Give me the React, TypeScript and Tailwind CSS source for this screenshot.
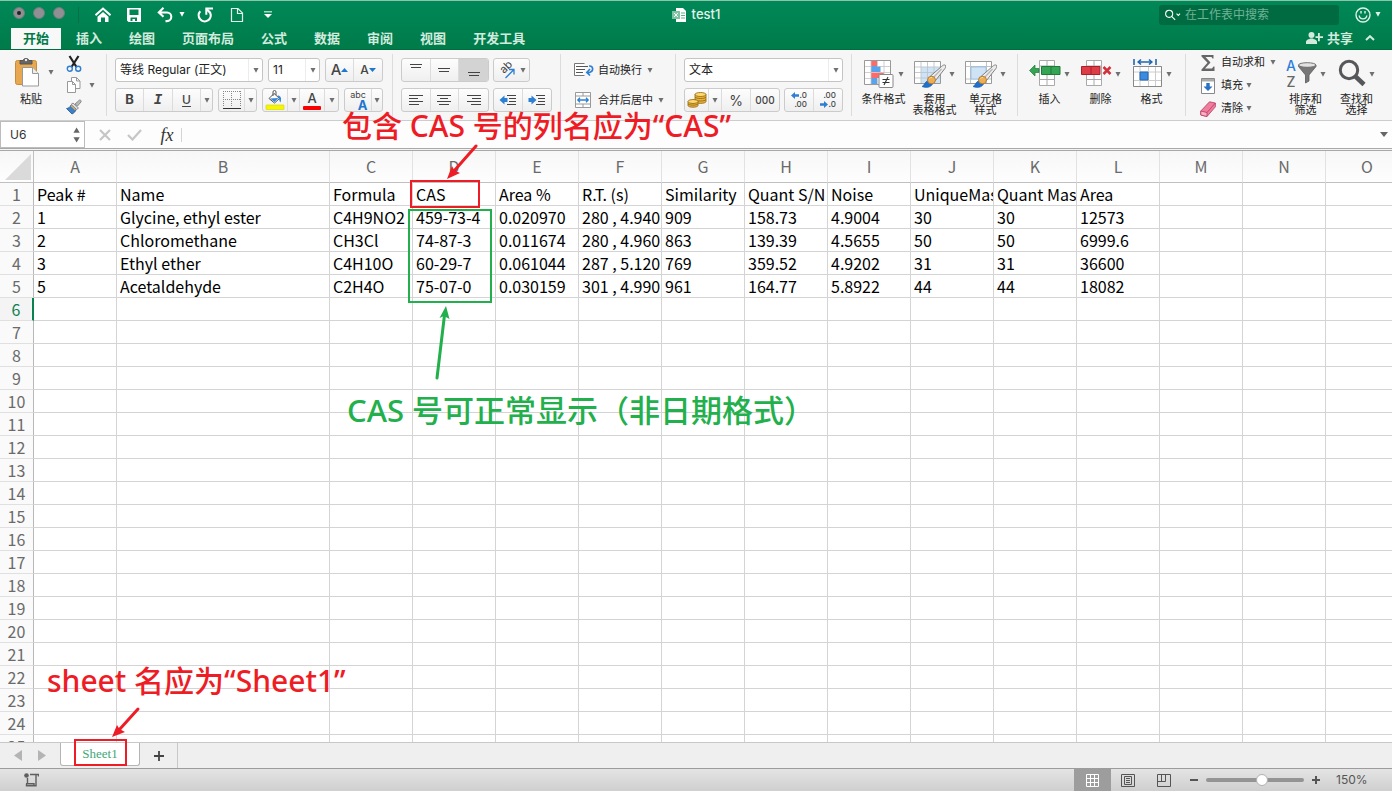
import React from "react";

const UI = "font-['Inter','Noto_Sans_CJK_SC',sans-serif]";
const SHEET = "font-['Noto_Sans_CJK_SC',sans-serif]";
const NOTE = "font-['Noto_Sans','Noto_Sans_CJK_SC',sans-serif]";

const columns = ["A", "B", "C", "D", "E", "F", "G", "H", "I", "J", "K", "L", "M", "N", "O"];

const data: string[][] = [
  ["Peak #", "Name", "Formula", "CAS", "Area %", "R.T. (s)", "Similarity", "Quant S/N", "Noise", "UniqueMass", "Quant Mass", "Area"],
  ["1", "Glycine, ethyl ester", "C4H9NO2", "459-73-4", "0.020970", "280 , 4.940", "909", "158.73", "4.9004", "30", "30", "12573"],
  ["2", "Chloromethane", "CH3Cl", "74-87-3", "0.011674", "280 , 4.960", "863", "139.39", "4.5655", "50", "50", "6999.6"],
  ["3", "Ethyl ether", "C4H10O", "60-29-7", "0.061044", "287 , 5.120", "769", "359.52", "4.9202", "31", "31", "36600"],
  ["5", "Acetaldehyde", "C2H4O", "75-07-0", "0.030159", "301 , 4.990", "961", "164.77", "5.8922", "44", "44", "18082"],
];

const rowNumbers = Array.from({ length: 25 }, (_, i) => i + 1);

function Caret({ className = "text-[#707070]" }: { className?: string }) {
  return (
    <svg width="6" height="5" viewBox="0 0 6 5" className={`shrink-0 ${className}`} aria-hidden="true">
      <path d="M.5 0h5L3 4.800z" fill="currentColor" />
    </svg>
  );
}

function Separator() {
  return <div className="mt-1 h-[62px] w-px shrink-0 bg-[#dcdcdc]" />;
}

function Box({ children, className = "" }: { children: React.ReactNode; className?: string }) {
  return (
    <div
      className={`flex h-6 shrink-0 divide-x divide-[#dcdcdc] overflow-hidden rounded-[3px] border border-[#cbcbcb] bg-gradient-to-b from-[#fdfdfd] to-[#efefef] ${className}`}
    >
      {children}
    </div>
  );
}

function Tool({ label, className = "", children }: { label: string; className?: string; children: React.ReactNode }) {
  return (
    <button type="button" aria-label={label} className={`flex h-full items-center justify-center ${className}`}>
      {children}
    </button>
  );
}

function Picker({ label, value, className }: { label: string; value: string; className: string }) {
  return (
    <label className={`relative flex h-6 shrink-0 rounded-[3px] border border-[#c4c4c4] bg-white ${className}`}>
      <select aria-label={label} className="h-full w-full appearance-none bg-transparent pl-1 text-[12px] text-[#222] outline-none">
        <option>{value}</option>
      </select>
      <span className="pointer-events-none absolute inset-y-0 right-0 flex w-[14px] items-center justify-center border-l border-[#ececec]">
        <Caret />
      </span>
    </label>
  );
}

function BigButton({ lines, icon }: { lines: string[]; icon: React.ReactNode }) {
  return (
    <button type="button" className="flex w-[51px] shrink-0 flex-col items-center pt-2 text-[11px] leading-[11px] text-[#222]">
      <span className="flex h-8 items-center gap-[3px]">
        {icon}
        <Caret />
      </span>
      <span className="mt-1 whitespace-nowrap">
        {lines.map((line) => (
          <span key={line} className="block">
            {line}
          </span>
        ))}
      </span>
    </button>
  );
}

function Lines({ rows }: { rows: [number, number, number][] }) {
  return (
    <svg width="16" height="16" viewBox="0 0 16 16" aria-hidden="true">
      {rows.map(([x, y, w]) => (
        <rect key={y} x={x} y={y} width={w} height="1" fill="#444" />
      ))}
    </svg>
  );
}

function GridIcon({ children, w = 32 }: { children?: React.ReactNode; w?: number }) {
  return (
    <svg width={w} height="32" viewBox={`0 0 ${w} 32`} aria-hidden="true">
      {children}
    </svg>
  );
}

function StyleBrush() {
  return (
    <>
      <path d="M31.300 7.200c.8.900.4 2.100-.4 3.300L21.500 22.500 16.500 18l11-9.500c1.300-1.200 2.800-2 3.800-1.300z" fill="#ededed" stroke="#808080" />
      <path d="M27.500 11 19 20" stroke="#b5b5b5" strokeWidth="1.200" />
      <path d="M8 28.500c2.500-1 2.500-4.500 6-6l4.500 3.500c-1.500 3.500-6.500 4.200-10.500 2.500z" fill="#1f6fd0" stroke="#1a57a0" strokeWidth=".6" />
      <ellipse cx="17.500" cy="22" rx="4" ry="3.800" fill="#eeae54" stroke="#a8712c" strokeWidth=".8" />
      <path d="M15.500 20.500a3 3 0 0 1 2.500-1" fill="none" stroke="#fbdca6" />
    </>
  );
}

function TitleBar() {
  const tabs = ["插入", "绘图", "页面布局", "公式", "数据", "审阅", "视图", "开发工具"];
  return (
    <header className="shrink-0 border-t border-[#8cc5a8] bg-gradient-to-b from-[#008858] to-[#007a49] text-white">
      <div className="grid h-[27px] grid-cols-[1fr_auto_1fr] items-center">
        <div className="flex h-full items-center">
          <div className="flex gap-2 pb-1 pl-[13px]">
            <button type="button" aria-label="关闭" className="flex size-3 items-center justify-center rounded-full border border-[#6f7d78] bg-[#909094]">
              <span className="size-1 rounded-full bg-[#222]" />
            </button>
            <button type="button" aria-label="最小化" className="size-3 rounded-full border border-[#6f7d78] bg-[#909094]" />
            <button type="button" aria-label="缩放" className="size-3 rounded-full border border-[#6f7d78] bg-[#909094]" />
          </div>
          <div className="ml-[13px] h-4 w-px bg-[#0a6e46]" />
          <button type="button" aria-label="主页" className="ml-4">
            <svg width="16" height="16" viewBox="0 0 16 16" aria-hidden="true">
              <path d="M.5 8.200 8 1.500l7.500 6.700" fill="none" stroke="#fff" strokeWidth="2" />
              <path d="M2.500 9.800 8 5l5.500 4.800V15H10v-4.500H6V15H2.500z" fill="#fff" />
            </svg>
          </button>
          <button type="button" aria-label="保存" className="ml-[15px]">
            <svg width="16" height="16" viewBox="0 0 16 16" aria-hidden="true">
              <path fillRule="evenodd" d="M1 1h14v14H2.500L1 13.500zM3.500 2.500V8h9V2.500zM4.500 10.500V14h2V12h2.500v2h2v-3.500z" fill="#fff" />
            </svg>
          </button>
          <button type="button" aria-label="撤消" className="ml-[15px]">
            <svg width="16" height="16" viewBox="0 0 16 16" aria-hidden="true">
              <path d="M6.500.8 1.800 5.500l4.700 4.200M2.500 5.500h7.500a4.300 4.300 0 0 1 0 8.600H8.500" fill="none" stroke="#fff" strokeWidth="2.100" />
            </svg>
          </button>
          <Caret className="ml-[6px] text-white" />
          <button type="button" aria-label="恢复" className="ml-3">
            <svg width="17" height="16" viewBox="0 0 17 16" aria-hidden="true">
              <path d="M3.300 4.200a6 6 0 1 0 9.800 1.500L10 2.500" fill="none" stroke="#fff" strokeWidth="2.200" />
              <path d="M16 1.500H9.300v6.300" fill="none" stroke="#fff" strokeWidth="2" />
            </svg>
          </button>
          <button type="button" aria-label="新建" className="ml-[15px]">
            <svg width="16" height="16" viewBox="0 0 16 16" aria-hidden="true">
              <path d="M2.500 1.500H9L13.500 6v8.500h-11zM8.500 1.500v5h5" fill="none" stroke="#e4f3ec" strokeWidth="1.200" />
            </svg>
          </button>
          <button type="button" aria-label="自定义工具栏" className="ml-[19px]">
            <svg width="8" height="8" viewBox="0 0 8 8" aria-hidden="true">
              <path d="M0 0h8v1.500H0z" fill="#a9d6c2" />
              <path d="M0 3h8L4 7z" fill="#fff" />
            </svg>
          </button>
        </div>
        <h1 className="flex items-center gap-[6px] text-[13px] font-medium text-[#e3f3eb]">
          <svg width="14" height="14" viewBox="0 0 14 14" aria-hidden="true">
            <path d="M4 0h7l3 3v11H4z" fill="#fff" />
            <path d="M9 5h4M9 7.500h4M9 10h4" stroke="#59b18b" />
            <path d="M0 3h8v8H0z" fill="#7cc2a3" />
            <path d="m2.200 5 3.600 4m0-4L2.200 9" stroke="#fff" />
          </svg>
          test1
        </h1>
        <div className="flex items-center justify-end">
          <label className="flex h-5 w-[180px] items-center rounded-[3px] bg-[#006b41] pl-[6px]">
            <svg width="18" height="12" viewBox="0 0 18 12" fill="none" stroke="#fff" strokeWidth="1.200" aria-hidden="true">
              <circle cx="4.700" cy="4.700" r="4" />
              <path d="m7.500 7.500 4 4M13 4.500l2 2 2-2" />
            </svg>
            <input
              aria-label="在工作表中搜索"
              placeholder="在工作表中搜索"
              className="ml-1 w-full bg-transparent text-[12px] outline-none placeholder:text-[#71b398]"
            />
          </label>
          <button type="button" aria-label="反馈" className="ml-4 flex items-center gap-1 pr-[11px]">
            <svg width="16" height="16" viewBox="0 0 16 16" fill="none" stroke="#dff2e9" strokeWidth="1.400" aria-hidden="true">
              <circle cx="8" cy="8" r="7" />
              <path d="M4.200 8.500c.5 4.500 7.100 4.500 7.600 0M6 4v2.500M10 4v2.500" />
            </svg>
            <Caret className="text-[#dff2e9]" />
          </button>
        </div>
      </div>
      <div className="flex h-[22px] items-end justify-between border-b border-[#006d40]">
        <nav className="flex gap-[3px] pl-[11px] text-[13px] font-bold leading-[21px] text-[#d3ebdf]">
          <a href="#home" className="bg-[#f8f8f8] px-3 text-[#007a49]">
            开始
          </a>
          {tabs.map((tab) => (
            <a key={tab} href={`#${tab}`} className="px-3">
              {tab}
            </a>
          ))}
        </nav>
        <div className="flex items-center gap-3 pr-[17px] text-[13px] font-bold leading-[22px] text-[#d3ebdf]">
          <button type="button" className="flex items-center gap-1">
            <svg width="17" height="12" viewBox="0 0 17 12" fill="currentColor" aria-hidden="true">
              <circle cx="5.500" cy="3" r="3" />
              <path d="M0 12V9.500C1 7 3 7.800 4 6.500h3c1 1.300 3 .5 4 3V12zM12 1h1.800v3.200H17V6h-3.200v3.200H12V6H9.500V4.200H12z" />
            </svg>
            共享
          </button>
          <button type="button" aria-label="折叠功能区">
            <svg width="10" height="6" viewBox="0 0 10 6" fill="none" stroke="currentColor" strokeWidth="2" aria-hidden="true">
              <path d="m1 5 4-3.800L9 5" />
            </svg>
          </button>
        </div>
      </div>
    </header>
  );
}

function ClipboardGroup() {
  return (
    <div className="flex w-[106px] shrink-0 pl-[14px]">
      <button type="button" className="flex w-[52px] flex-col items-start pt-[6px] text-[11px] leading-[14px] text-[#222]">
        <span className="flex items-center gap-2">
          <svg width="26" height="32" viewBox="0 0 26 32" aria-hidden="true">
            <rect x="1.500" y="4.500" width="21" height="24" rx="2" fill="#e8a850" stroke="#c98b38" />
            <path d="M6 8V4.500h3a3.200 3.200 0 0 1 6 0h3V8z" fill="#666" stroke="#555" />
            <circle cx="12" cy="4" r="1.200" fill="#eee" />
            <path d="M8.500 11.500h10l6 6V30h-16z" fill="#fff" stroke="#999" />
            <path d="M18.500 11.500v6h6" fill="#eee" stroke="#999" />
          </svg>
          <Caret />
        </span>
        <span className="pl-[6px] pt-1">粘贴</span>
      </button>
      <div className="flex flex-col">
        <Tool label="剪切" className="h-[23px] w-4">
          <svg width="16" height="18" viewBox="0 0 16 18" fill="none" aria-hidden="true">
            <path d="M3.500 1 10.500 12M12.500 1 5.500 12" stroke="#222" strokeWidth="2.200" />
            <circle cx="3.800" cy="13.800" r="2.500" stroke="#2f7dd1" strokeWidth="1.400" />
            <circle cx="12.200" cy="13.800" r="2.500" stroke="#2f7dd1" strokeWidth="1.400" />
          </svg>
        </Tool>
        <button type="button" aria-label="复制" className="flex h-[23px] items-center gap-[7px]">
          <svg width="16" height="16" viewBox="0 0 16 16" fill="#fff" stroke="#999" aria-hidden="true">
            <path d="M5.500.5h5l3.500 3.500v7.500H5.500zM10.500.5V4H14" />
            <path d="M1.500 4.500h5l3 3v8h-8zM6.500 4.500v3h3" />
          </svg>
          <Caret />
        </button>
        <Tool label="格式刷" className="h-[23px] w-4">
          <svg width="16" height="16" viewBox="0 0 16 16" aria-hidden="true">
            <path d="M13.500 1c1.500 0 2 1 1.500 2l-3.500 4L9 5z" fill="#bbb" stroke="#777" strokeWidth=".8" />
            <path d="m7 4 5.500 5-2 1.500L5 5.500z" fill="#ddd" stroke="#777" strokeWidth=".8" />
            <path d="m5 6 5 4.500c-.5 2-2 3.500-4 4.500L.5 9.500C2.500 9.500 4 8 5 6z" fill="#3f80c4" stroke="#23568f" strokeWidth=".8" />
            <path d="m5.300 6 4.700 4.300-1 1L4.500 7z" fill="#e3ad62" />
          </svg>
        </Tool>
      </div>
    </div>
  );
}

function FontGroup() {
  return (
    <div className="flex shrink-0 flex-col gap-[6px] pl-2 pr-[9px] pt-2">
      <div className="flex gap-[5px]">
        <Picker label="字体" value="等线 Regular (正文)" className="w-[148px]" />
        <Picker label="字号" value="11" className="w-[52px]" />
        <Box className="w-[58px]">
          <Tool label="增大字号" className="w-1/2">
            <span className="text-[15px] font-medium text-[#444]">A</span>
            <svg width="7" height="4" viewBox="0 0 7 4" aria-hidden="true">
              <path d="M0 4h7L3.500 0z" fill="#1d76cf" />
            </svg>
          </Tool>
          <Tool label="减小字号" className="w-1/2">
            <span className="text-[12px] font-medium text-[#444]">A</span>
            <svg width="7" height="4" viewBox="0 0 7 4" aria-hidden="true">
              <path d="M0 0h7L3.500 4z" fill="#1d76cf" />
            </svg>
          </Tool>
        </Box>
      </div>
      <div className="flex gap-[5px] text-[#444]">
        <Box className="w-[98px]">
          <Tool label="加粗" className="w-7 text-[13px] font-bold">B</Tool>
          <Tool label="倾斜" className="w-[29px] font-['Liberation_Mono',monospace] text-[14px] font-bold italic">I</Tool>
          <Tool label="下划线" className="w-7 text-[12px] font-medium underline underline-offset-2">U</Tool>
          <Tool label="下划线选项" className="flex-1">
            <Caret />
          </Tool>
        </Box>
        <Box className="w-[39px]">
          <Tool label="边框" className="w-[26px]">
            <svg width="18" height="18" viewBox="0 0 18 18" aria-hidden="true">
              <path
                d="M0 .5h18M0 8.500h18M.5 0v16M8.500 0v16M17.500 0v16"
                fill="none"
                stroke="#888"
                strokeDasharray="1 1"
              />
              <path d="M0 17h18v1H0z" fill="#333" />
            </svg>
          </Tool>
          <Tool label="边框选项" className="flex-1">
            <Caret />
          </Tool>
        </Box>
        <Box className="w-[77px]">
          <Tool label="填充颜色" className="w-[25px]">
            <svg width="20" height="20" viewBox="0 0 20 20" aria-hidden="true">
              <path d="m4 8.500 5-5 5.500 5-5 4.500z" fill="#fff" stroke="#555" />
              <path d="m5 8.500 8.500-.5-4 4z" fill="#3287d9" />
              <path d="M8 6V2a1.500 1.500 0 0 1 3 0v3" fill="none" stroke="#555" />
              <path d="M12.500 5.500c3 0 4.500 2.500 3 7-1.300-1-1-4-3-7z" fill="#3287d9" />
              <rect x="1" y="15" width="18" height="4.500" rx=".5" fill="#f6f600" stroke="#d5d500" strokeWidth=".6" />
            </svg>
          </Tool>
          <Tool label="填充颜色选项" className="w-3">
            <Caret />
          </Tool>
          <Tool label="字体颜色" className="w-[25px] flex-col gap-px">
            <span className="text-[13px] font-medium leading-[14px]">A</span>
            <span className="h-1 w-[18px] rounded-[1px] bg-[#f60000]" />
          </Tool>
          <Tool label="字体颜色选项" className="flex-1">
            <Caret />
          </Tool>
        </Box>
        <Box className="w-[39px]">
          <Tool label="拼音指南" className="w-[27px]">
            <span className="flex flex-col">
              <span className="text-[9px] leading-[9px]">abc</span>
              <span className="pl-[9px] text-[13px] font-bold leading-[12px] text-[#1d76cf]">A</span>
            </span>
          </Tool>
          <Tool label="拼音选项" className="flex-1">
            <Caret />
          </Tool>
        </Box>
      </div>
    </div>
  );
}

function AlignGroup() {
  return (
    <div className="flex shrink-0 flex-col gap-[6px] px-2 pt-2">
      <div className="flex gap-1">
        <Box className="w-[88px]">
          <Tool label="顶端对齐" className="w-1/3">
            <Lines rows={[[2, 2, 12], [3, 5, 10]]} />
          </Tool>
          <Tool label="垂直居中" className="w-1/3">
            <Lines rows={[[2, 6, 12], [3, 9, 10]]} />
          </Tool>
          <Tool label="底端对齐" className="w-1/3 bg-[#d3d3d3]">
            <Lines rows={[[2, 10, 12], [3, 13, 10]]} />
          </Tool>
        </Box>
        <Box className="w-[37px]">
          <Tool label="方向" className="w-full gap-[3px]">
            <svg width="20" height="20" viewBox="0 0 20 20" fill="none" aria-hidden="true">
              <text x="0" y="0" fontSize="11" fill="#444" transform="translate(7 14) rotate(-45)">
                ab
              </text>
              <path d="m8.500 18 8.500-8.500m-5 0h5v5" stroke="#2d7fd3" strokeWidth="1.300" />
            </svg>
            <Caret />
          </Tool>
        </Box>
      </div>
      <div className="flex gap-1">
        <Box className="w-[88px]">
          <Tool label="左对齐" className="w-1/3">
            <Lines rows={[[1, 3, 14], [1, 6, 9], [1, 9, 14], [1, 12, 10]]} />
          </Tool>
          <Tool label="居中" className="w-1/3">
            <Lines rows={[[1, 3, 14], [4, 6, 8], [1, 9, 14], [3, 12, 10]]} />
          </Tool>
          <Tool label="右对齐" className="w-1/3">
            <Lines rows={[[1, 3, 14], [6, 6, 9], [1, 9, 14], [5, 12, 10]]} />
          </Tool>
        </Box>
        <Box className="w-[59px]">
          <Tool label="减少缩进量" className="w-1/2">
            <svg width="18" height="14" viewBox="0 0 18 14" aria-hidden="true">
              <path d="M8 2.500h9M10 5.500h7M10 8.500h7M8 11.500h9" stroke="#444" />
              <path d="M.5 7 5.500 2.500V5h3v4h-3v2.500z" fill="#2d7fd3" />
            </svg>
          </Tool>
          <Tool label="增加缩进量" className="w-1/2">
            <svg width="18" height="14" viewBox="0 0 18 14" aria-hidden="true">
              <path d="M8 2.500h9M10 5.500h7M10 8.500h7M8 11.500h9" stroke="#444" />
              <path d="M8.500 7l-5-4.500V5h-3v4h3v2.500z" fill="#2d7fd3" />
            </svg>
          </Tool>
        </Box>
      </div>
    </div>
  );
}

function WrapGroup() {
  return (
    <div className="flex w-[114px] shrink-0 flex-col gap-[6px] pl-[13px] pt-2 text-[11px] text-[#222]">
      <button type="button" className="flex h-6 items-center">
        <svg width="20" height="14" viewBox="0 0 20 14" fill="none" aria-hidden="true">
          <path d="M10.500.5H.5v12h10" stroke="#777" fill="#fff" />
          <path d="M2 3.500h12M2 6.500h9M2 9.500h7" stroke="#555" />
          <path d="M15 3c4-.5 5.500 5 .5 6.500H13m3-3.500-3.200 3.400L16 12.500" stroke="#2d7fd3" strokeWidth="1.600" />
        </svg>
        <span className="ml-1 mr-[5px]">自动换行</span>
        <Caret />
      </button>
      <button type="button" className="flex h-6 items-center">
        <svg width="18" height="18" viewBox="0 0 18 18" fill="none" aria-hidden="true">
          <path d="M1.500 1.500h15v15h-15zM1.500 5h15M1.500 13h15M9 1.500V5M9 13v3.500" stroke="#999" fill="#fff" />
          <path d="M4 9h10M6 6.800 3.800 9 6 11.200M12 6.800 14.200 9 12 11.200" stroke="#2d7fd3" strokeWidth="1.300" />
        </svg>
        <span className="ml-[6px] mr-[5px]">合并后居中</span>
        <Caret />
      </button>
    </div>
  );
}

function NumberGroup() {
  return (
    <div className="flex shrink-0 flex-col gap-[6px] px-2 pt-2">
      <Picker label="数字格式" value="文本" className="w-[159px]" />
      <div className="flex gap-1 text-[#444]">
        <Box className="w-[96px]">
          <Tool label="会计格式" className="w-6">
            <svg width="20" height="16" viewBox="0 0 20 16" fill="#e9b33a" stroke="#8d6210" strokeWidth=".8" aria-hidden="true">
              <path d="M8 2.500v7c0 2.500 11 2.500 11 0v-7z" />
              <path d="M8 5c1 2 10 2 11 0M8 7.500c1 2 10 2 11 0" fill="none" />
              <ellipse cx="13.500" cy="2.500" rx="5.500" ry="2" fill="#ffd970" />
              <path d="M1 9.500v4c0 2.300 10 2.300 10 0v-4z" />
              <path d="M1 11.800c1 1.800 9 1.800 10 0" fill="none" />
              <ellipse cx="6" cy="9.500" rx="5" ry="2" fill="#ffd970" />
            </svg>
          </Tool>
          <Tool label="会计格式选项" className="w-[13px]">
            <Caret />
          </Tool>
          <Tool label="百分比" className="w-[29px] text-[14px]">%</Tool>
          <Tool label="千位分隔" className="flex-1 text-[10px] font-medium">000</Tool>
        </Box>
        <Box className="w-[59px] text-[8px] font-medium leading-[9px]">
          <Tool label="增加小数位数" className="w-1/2">
            <span className="flex flex-col items-end">
              <span className="flex items-center gap-px">
                <svg width="8" height="7" viewBox="0 0 8 7" aria-hidden="true">
                  <path d="M0 3.500 4 0v2.200h4v2.600H4V7z" fill="#2d7fd3" />
                </svg>
                .0
              </span>
              <span>.00</span>
            </span>
          </Tool>
          <Tool label="减少小数位数" className="w-1/2">
            <span className="flex flex-col items-end">
              <span>.00</span>
              <span className="flex items-center gap-px">
                <svg width="8" height="7" viewBox="0 0 8 7" aria-hidden="true">
                  <path d="M8 3.500 4 0v2.200H0v2.600h4V7z" fill="#2d7fd3" />
                </svg>
                .0
              </span>
            </span>
          </Tool>
        </Box>
      </div>
    </div>
  );
}

function StylesGroup() {
  return (
    <div className="flex shrink-0 px-[6px]">
      <BigButton
        lines={["条件格式"]}
        icon={
          <GridIcon>
            <path d="M1.500 2.500h26v24h-26z" fill="#fff" stroke="#999" />
            <path d="M8 3h6v5H8zM8 14.500h13V20H8z" fill="#fa6b6b" />
            <path d="M8 8h9.500v6H8zM8 20h6v6H8z" fill="#57a3ec" />
            <path d="M2 8.500h6M2 14.500h6M2 20.500h6M14 8.500h13M14 14.500h13M21 20.500h6M8 3v23M14.500 3v5M14.500 20v6M21 3v23" stroke="#c4c4c4" fill="none" strokeWidth=".8" />
            <rect x="16" y="16.500" width="14" height="13" rx="1" fill="#fff" stroke="#888" />
            <path d="M19.500 21.500h7M19.500 24.500h7M25 19l-4 8" stroke="#333" strokeWidth="1.100" />
          </GridIcon>
        }
      />
      <BigButton
        lines={["套用", "表格格式"]}
        icon={
          <GridIcon>
            <path d="M.5 3.500h26v22H.5z" fill="#fff" stroke="#999" />
            <path d="M7 9h19v16H7z" fill="#cfe3f6" />
            <path d="M1 9h25M1 14.500h25M1 20h25M7 4v21M13.500 4v21M20 4v21" stroke="#bcc5cc" fill="none" strokeWidth=".9" />
            <StyleBrush />
          </GridIcon>
        }
      />
      <BigButton
        lines={["单元格", "样式"]}
        icon={
          <GridIcon>
            <path d="M.5 3.500h26v22H.5z" fill="#fff" stroke="#999" />
            <path d="M1 8.500h25M1 21h25M5.500 4v21M21.500 4v21" stroke="#c4c4c4" fill="none" />
            <path d="M6 9h15v12H6z" fill="#cfe3f6" stroke="#8ab6df" strokeWidth=".7" />
            <StyleBrush />
          </GridIcon>
        }
      />
    </div>
  );
}

function CellsGroup() {
  return (
    <div className="flex shrink-0 pl-[6px] pr-2">
      <BigButton
        lines={["插入"]}
        icon={
          <GridIcon>
            <path d="M10.500 2.500h15v25h-15zM10.500 8h15M10.500 21.500h15M18 2.500v25" fill="#fff" stroke="#aaa" />
            <path d="M12.500 8.500H31v8H12.500z" fill="#35a455" stroke="#1d7a39" />
            <path d="M22 8.500v8" stroke="#1d7a39" />
            <path d="M.5 12.500 6 7v3.500h4v4H6V18z" fill="#35a455" stroke="#1d7a39" strokeWidth=".7" />
          </GridIcon>
        }
      />
      <BigButton
        lines={["删除"]}
        icon={
          <GridIcon>
            <path d="M6.500 2.500h15v25h-15zM6.500 8h15M6.500 21.500h15M14 2.500v25" fill="#fff" stroke="#aaa" />
            <path d="M1.500 8.500H20v8H1.500z" fill="#dd3d46" stroke="#a92029" />
            <path d="M11 8.500v8" stroke="#a92029" />
            <path d="m23.500 9 7 7m0-7-7 7" stroke="#d2303a" strokeWidth="2.500" />
          </GridIcon>
        }
      />
      <BigButton
        lines={["格式"]}
        icon={
          <GridIcon>
            <path d="M2.500 8.500h28v20h-28zM2.500 14h28M2.500 22.500h28M9 8.500v20M17.500 8.500v20M24.500 8.500v20" fill="#fff" stroke="#ccc" />
            <path d="M2.500 8.500h28v20h-28z" fill="none" stroke="#888" />
            <path d="M9 14h8v8H9z" fill="#3c8be0" stroke="#2367b0" />
            <path d="M3 1v6M25 1v6M8 4h12M10 1.500 7.200 4 10 6.500M18 1.500 20.800 4 18 6.500" stroke="#2367b0" strokeWidth="1.600" fill="none" />
          </GridIcon>
        }
      />
    </div>
  );
}

function EditGroup() {
  return (
    <div className="flex shrink-0 pl-[14px]">
      <div className="flex w-20 flex-col pt-px text-[11px] text-[#222]">
        <button type="button" className="flex h-[23px] items-center">
          <svg width="16" height="18" viewBox="0 0 16 18" aria-hidden="true">
            <path d="M1.500 1h12v3.500H12.500L11.500 3H5.500l5 5.500-5.500 6h7l1.500-2h1V17H1.500v-1.500l6-6.800L1.500 2.500z" fill="#666" />
          </svg>
          <span className="ml-[5px] mr-[5px]">自动求和</span>
          <Caret />
        </button>
        <button type="button" className="flex h-[23px] items-center">
          <svg width="16" height="16" viewBox="0 0 16 16" aria-hidden="true">
            <path d="M1.500.5h13v15h-13z" fill="#fff" stroke="#888" />
            <path d="M2 1h12v2.500H2z" fill="#aaa" />
            <path d="M6.300 5h3.400v3.500h2.800L8 13 3.500 8.500h2.800z" fill="#2971c4" />
          </svg>
          <span className="ml-[5px] mr-[3px]">填充</span>
          <Caret />
        </button>
        <button type="button" className="flex h-[23px] items-center">
          <svg width="16" height="16" viewBox="0 0 16 16" stroke="#b83b63" strokeWidth=".8" aria-hidden="true">
            <path d="M9.500.8 15.400 2v3.800L7 15.500.8 14V10z" fill="#ef7d9c" />
            <path d="M.8 10 7 11.500v4L.8 14z" fill="#f9b3c4" />
            <path d="M7 11.500 15.400 2" fill="none" />
          </svg>
          <span className="ml-[5px] mr-[3px]">清除</span>
          <Caret />
        </button>
      </div>
      <BigButton
        lines={["排序和", "筛选"]}
        icon={
          <span className="flex">
            <span className="flex w-3 flex-col items-center text-[14px] font-medium leading-4">
              <span className="text-[#2b7fdb]">A</span>
              <span className="text-[#666]">Z</span>
            </span>
            <svg width="20" height="32" viewBox="0 0 20 32" aria-hidden="true">
              <path d="M1.500 7v1.500l7 8.500v8l3.500-2V17l7-8.500V7z" fill="#777" stroke="#5a5a5a" strokeWidth=".8" />
              <ellipse cx="10.200" cy="7" rx="8.700" ry="2.300" fill="#e2e2e2" stroke="#666" strokeWidth=".9" />
            </svg>
          </span>
        }
      />
      <BigButton
        lines={["查找和", "选择"]}
        icon={
          <GridIcon w={28}>
            <circle cx="11" cy="12" r="8.700" fill="#f6f6f6" stroke="#55575a" strokeWidth="3" />
            <path d="m17.500 18.500 8.500 8" stroke="#55575a" strokeWidth="4.500" />
          </GridIcon>
        }
      />
    </div>
  );
}

function FormulaBar() {
  return (
    <div className="flex h-[27px] shrink-0 bg-[#fdfdfd]">
      <label className="flex w-[85px] shrink-0 items-center border border-[#bcbcbc] bg-white pl-[9px] pr-1">
        <input aria-label="名称框" defaultValue="U6" className="w-full min-w-0 bg-transparent text-[12px] text-[#333] outline-none" />
        <svg width="8" height="18" viewBox="0 0 8 18" fill="#666" aria-hidden="true">
          <path d="M.5 6.500h7L4 .5zM.5 11.500h7L4 17.500z" />
        </svg>
      </label>
      <div className="flex shrink-0 items-center pl-[14px]">
        <button type="button" aria-label="取消">
          <svg width="12" height="12" viewBox="0 0 12 12" stroke="#c6c6c6" strokeWidth="2.200" aria-hidden="true">
            <path d="m1 1 10 10M11 1 1 11" />
          </svg>
        </button>
        <button type="button" aria-label="输入" className="ml-4">
          <svg width="15" height="12" viewBox="0 0 15 12" fill="none" stroke="#c6c6c6" strokeWidth="2.200" aria-hidden="true">
            <path d="m1 6 4.500 4.500L14 1" />
          </svg>
        </button>
        <button type="button" className="ml-4 w-[18px] font-['Liberation_Serif',serif] text-[18px] italic leading-5 text-[#333]">
          fx
        </button>
        <div className="ml-[5px] h-[14px] w-px bg-[#d5d5d5]" />
      </div>
      <input aria-label="编辑栏" className="min-w-0 flex-1 bg-transparent px-2 outline-none" />
      <button type="button" aria-label="展开编辑栏" className="pr-1">
        <svg width="8" height="5" viewBox="0 0 8 5" aria-hidden="true">
          <path d="M0 0h8L4 5z" fill="#666" />
        </svg>
      </button>
    </div>
  );
}

function Sheet() {
  return (
    <main className="min-h-0 flex-1 overflow-hidden bg-white">
      <table className={`w-[1409px] table-fixed border-separate border-spacing-0 text-[16px] ${SHEET}`}>
        <colgroup>
          <col className="w-[34px]" />
          {columns.map((c) => (
            <col key={c} className={c === "B" ? "w-[213px]" : "w-[83px]"} />
          ))}
        </colgroup>
        <thead>
          <tr className="h-8 bg-gradient-to-b from-[#f7f7f7] to-[#fefefe]">
            <th className="border-b border-r border-[#c0c0c0] p-0">
              <svg width="26" height="26" viewBox="0 0 26 26" className="ml-auto mr-[2px]" aria-hidden="true">
                <path d="M26 0v26H0z" fill="#dadada" />
              </svg>
            </th>
            {columns.map((c) => (
              <th key={c} scope="col" className="border-b border-r border-b-[#c0c0c0] border-r-[#e2e2e2] p-0 pb-px font-normal leading-5 text-[#6a6a6a]">
                {c}
              </th>
            ))}
          </tr>
        </thead>
        <tbody>
          {rowNumbers.map((n) => (
            <tr key={n} className="h-[23px]">
              <th
                scope="row"
                className={
                  n === 6
                    ? "border-b border-r-2 border-b-[#e0e0e0] border-r-[#0d8050] bg-[#f4f4f4] p-0 font-normal leading-[22px] text-[#0d8050]"
                    : "border-b border-r border-b-[#e0e0e0] border-r-[#b8b8b8] bg-[#fafafa] p-0 font-normal leading-[22px] text-[#6a6a6a]"
                }
              >
                {n}
              </th>
              {columns.map((c, i) => (
                <td key={c} className="overflow-hidden whitespace-pre border-b border-r border-[#d4d4d4] p-0 pl-[3px] leading-[22px] text-black">
                  {data[n - 1]?.[i] ?? ""}
                </td>
              ))}
            </tr>
          ))}
        </tbody>
      </table>
    </main>
  );
}

function Footer() {
  return (
    <footer className="shrink-0">
      <div className="flex h-[26px] border-t border-[#c8c8c8] bg-[#efefef]">
        <button type="button" aria-label="上一个工作表" className="ml-[14px]">
          <svg width="8" height="11" viewBox="0 0 8 11" aria-hidden="true">
            <path d="M8 0v11L0 5.500z" fill="#b4b4b4" />
          </svg>
        </button>
        <button type="button" aria-label="下一个工作表" className="ml-4">
          <svg width="8" height="11" viewBox="0 0 8 11" aria-hidden="true">
            <path d="M0 0v11l8-5.500z" fill="#b4b4b4" />
          </svg>
        </button>
        <button
          type="button"
          className="ml-[14px] h-[23px] w-20 rounded-b-[3px] border border-t-0 border-[#b5b5b5] bg-white font-['Liberation_Serif',serif] text-[13px] text-[#3fa67a]"
        >
          Sheet1
        </button>
        <button type="button" aria-label="新建工作表" className="flex w-[38px] items-center justify-center border-r border-[#c8c8c8]">
          <svg width="10" height="10" viewBox="0 0 10 10" stroke="#444" strokeWidth="1.800" aria-hidden="true">
            <path d="M5 0v10M0 5h10" />
          </svg>
        </button>
      </div>
      <div className="flex h-[23px] items-center justify-between border-t border-[#9c9c9c] bg-gradient-to-b from-[#e4e4e4] to-[#cfcfcf]">
        <button type="button" aria-label="录制宏" className="ml-6">
          <svg width="15" height="14" viewBox="0 0 15 14" fill="none" stroke="#5e5e5e" strokeWidth="1.400" aria-hidden="true">
            <circle cx="2.500" cy="2.500" r="2.300" fill="#5e5e5e" stroke="none" />
            <path d="M6 1.500h8.500v2M12 1.500v11.300H2.500v-2M3.500 5v6.500M2.500 12.800h7.500v-2H2" />
          </svg>
        </button>
        <div className="flex h-full items-center">
          <button type="button" aria-label="普通" className="flex h-full w-[37px] items-center justify-center bg-[#9d9d9d]">
            <svg width="13" height="13" viewBox="0 0 13 13" fill="none" stroke="#fff" aria-hidden="true">
              <path d="M.5.500h12v12H.5zM.5 4.500h12M.5 8.500h12M4.500.5v12M8.500.5v12" />
            </svg>
          </button>
          <button type="button" aria-label="页面布局" className="ml-[10px]">
            <svg width="14" height="13" viewBox="0 0 14 13" fill="none" stroke="#555" aria-hidden="true">
              <path d="M.5.500h13v12H.5zM3.500 2.500h7v8h-7zM5 4.500h4M5 6.500h4M5 8.500h4" />
            </svg>
          </button>
          <button type="button" aria-label="分页预览" className="ml-[22px]">
            <svg width="14" height="13" viewBox="0 0 14 13" fill="none" stroke="#555" aria-hidden="true">
              <path d="M.5.500h13v12H.5zM.5 7.500h8M4.500.5v7M8.500.5v7" />
            </svg>
          </button>
          <button type="button" aria-label="缩小" className="ml-[19px]">
            <svg width="8" height="8" viewBox="0 0 8 8" stroke="#555" strokeWidth="2" aria-hidden="true">
              <path d="M0 4h8" />
            </svg>
          </button>
          <input
            type="range"
            aria-label="缩放"
            min="0"
            max="100"
            defaultValue="58"
            className="ml-2 h-1 w-[98px] appearance-none rounded-full bg-[#949494] [&::-webkit-slider-thumb]:size-3 [&::-webkit-slider-thumb]:appearance-none [&::-webkit-slider-thumb]:rounded-full [&::-webkit-slider-thumb]:border [&::-webkit-slider-thumb]:border-[#b0b0b0] [&::-webkit-slider-thumb]:bg-white"
          />
          <button type="button" aria-label="放大" className="ml-2">
            <svg width="8" height="8" viewBox="0 0 8 8" stroke="#555" strokeWidth="2" aria-hidden="true">
              <path d="M0 4h8M4 0v8" />
            </svg>
          </button>
          <span className="ml-4 w-[56px] text-[12px] text-[#555]">150%</span>
        </div>
      </div>
    </footer>
  );
}

function Annotations() {
  return (
    <div className={`pointer-events-none absolute inset-0 whitespace-nowrap text-[30px] font-medium leading-9 ${NOTE}`}>
      <p className="absolute left-[342px] top-[108px] text-[#ee1c25]">包含 CAS 号的列名应为“CAS”</p>
      <p className="absolute left-[347px] top-[392px] text-[31px] text-[#22b04c]">CAS 号可正常显示（非日期格式）</p>
      <p className="absolute bottom-[92px] left-[47px] text-[#ee1c25]">sheet 名应为“Sheet1”</p>
      <div className="absolute left-[410px] top-[180px] h-7 w-[70px] border-2 border-[#ee1c25]" />
      <div className="absolute left-[408px] top-[209px] h-[94px] w-[84px] border-2 border-[#22b04c]" />
      <div className="absolute bottom-[25px] left-[74px] h-[27px] w-[53px] border-2 border-[#ee1c25]" />
      <svg width="34" height="36" viewBox="0 0 34 36" className="absolute left-[445px] top-[144px]" aria-hidden="true">
        <path d="M31 2 9 27" stroke="#ee1c25" strokeWidth="3" strokeLinecap="round" />
        <path d="M2 35 7 22l2.500 4.500L15 29z" fill="#ee1c25" />
      </svg>
      <svg width="18" height="76" viewBox="0 0 18 76" className="absolute left-[433px] top-[305px]" aria-hidden="true">
        <path d="M4 73 11.500 10" stroke="#22b04c" strokeWidth="3" strokeLinecap="round" />
        <path d="M13 1 6.500 13l4.500-2 5.500 3z" fill="#22b04c" />
      </svg>
      <svg width="30" height="32" viewBox="0 0 30 32" className="absolute bottom-[53px] left-[111px]" aria-hidden="true">
        <path d="M27 3 8 24" stroke="#ee1c25" strokeWidth="3" strokeLinecap="round" />
        <path d="M1 31 6 19l2.500 4 5.500 3z" fill="#ee1c25" />
      </svg>
    </div>
  );
}

export default function App() {
  return (
    <div className={`relative flex h-screen flex-col overflow-hidden bg-white ${UI}`}>
      <TitleBar />
      <section aria-label="功能区" className="flex h-[71px] shrink-0 overflow-hidden border-b border-[#cdcdcd] bg-[#f6f6f6]">
        <ClipboardGroup />
        <Separator />
        <FontGroup />
        <Separator />
        <AlignGroup />
        <Separator />
        <WrapGroup />
        <Separator />
        <NumberGroup />
        <Separator />
        <StylesGroup />
        <Separator />
        <CellsGroup />
        <Separator />
        <EditGroup />
      </section>
      <FormulaBar />
      <div className="h-[3px] shrink-0 border-y border-[#a8a8a8] bg-[#f4f4f4]" />
      <Sheet />
      <Footer />
      <Annotations />
    </div>
  );
}
